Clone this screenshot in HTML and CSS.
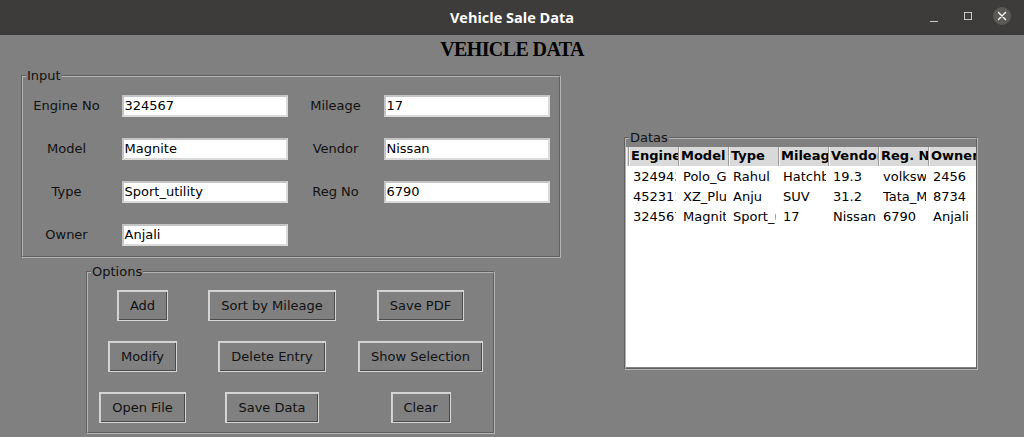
FILE: index.html
```html
<!DOCTYPE html>
<html>
<head>
<meta charset="utf-8">
<title>Vehicle Sale Data</title>
<link rel="stylesheet" href="styles.css">
</head>
<body>
<div class="window">
  <header class="titlebar">
    <span class="title">Vehicle Sale Data</span>
    <div class="controls">
      <span class="ctl-min"></span>
      <span class="ctl-max"></span>
      <span class="ctl-close">
        <svg width="18" height="18" viewBox="0 0 18 18"><path d="M5.5 5.5 L12.5 12.5 M12.5 5.5 L5.5 12.5" stroke="#ffffff" stroke-width="1.4" fill="none" stroke-linecap="round"/></svg>
      </span>
    </div>
  </header>
  <main class="app">
    <h1 class="heading">VEHICLE DATA</h1>
    <div class="panes">
      <div class="left">
        <fieldset class="frame input-frame">
          <legend>Input</legend>
          <div class="input-grid">
            <label class="lbl">Engine No</label>
            <div class="entry">324567</div>
            <label class="lbl">Mileage</label>
            <div class="entry">17</div>

            <label class="lbl">Model</label>
            <div class="entry">Magnite</div>
            <label class="lbl">Vendor</label>
            <div class="entry">Nissan</div>

            <label class="lbl">Type</label>
            <div class="entry">Sport_utility</div>
            <label class="lbl">Reg No</label>
            <div class="entry">6790</div>

            <label class="lbl">Owner</label>
            <div class="entry">Anjali</div>
          </div>
        </fieldset>
        <fieldset class="frame options-frame">
          <legend>Options</legend>
          <div class="btn-grid">
            <button class="btn">Add</button>
            <button class="btn">Sort by Mileage</button>
            <button class="btn">Save PDF</button>
            <button class="btn">Modify</button>
            <button class="btn">Delete Entry</button>
            <button class="btn">Show Selection</button>
            <button class="btn">Open File</button>
            <button class="btn">Save Data</button>
            <button class="btn">Clear</button>
          </div>
        </fieldset>
      </div>
      <div class="right">
        <fieldset class="frame datas-frame">
          <legend>Datas</legend>
          <div class="tree">
            <div class="tr thead">
              <div class="stub"></div>
              <div class="th">Engine No</div>
              <div class="th">Model</div>
              <div class="th">Type</div>
              <div class="th">Mileage</div>
              <div class="th">Vendor</div>
              <div class="th">Reg. No</div>
              <div class="th">Owner</div>
            </div>
            <div class="tr">
              <div class="stub"></div>
              <div class="td"><span class="cell">324943</span></div>
              <div class="td"><span class="cell">Polo_GT</span></div>
              <div class="td"><span class="cell">Rahul</span></div>
              <div class="td"><span class="cell">Hatchback</span></div>
              <div class="td"><span class="cell">19.3</span></div>
              <div class="td"><span class="cell">volkswagen</span></div>
              <div class="td"><span class="cell">2456</span></div>
            </div>
            <div class="tr">
              <div class="stub"></div>
              <div class="td"><span class="cell">452311</span></div>
              <div class="td"><span class="cell">XZ_Plus</span></div>
              <div class="td"><span class="cell">Anju</span></div>
              <div class="td"><span class="cell">SUV</span></div>
              <div class="td"><span class="cell">31.2</span></div>
              <div class="td"><span class="cell">Tata_Motors</span></div>
              <div class="td"><span class="cell">8734</span></div>
            </div>
            <div class="tr">
              <div class="stub"></div>
              <div class="td"><span class="cell">324567</span></div>
              <div class="td"><span class="cell">Magnite</span></div>
              <div class="td"><span class="cell">Sport_utility</span></div>
              <div class="td"><span class="cell">17</span></div>
              <div class="td"><span class="cell">Nissan</span></div>
              <div class="td"><span class="cell">6790</span></div>
              <div class="td"><span class="cell">Anjali</span></div>
            </div>
          </div>
        </fieldset>
      </div>
    </div>
  </main>
</div>
</body>
</html>
```

FILE: styles.css
```css
* { box-sizing: border-box; }

html, body {
  margin: 0;
  padding: 0;
  width: 1024px;
  height: 437px;
  overflow: hidden;
  background: #808080;
  font-family: "DejaVu Sans", sans-serif;
  font-size: 13px;
  color: #111;
}

.window {
  width: 1024px;
  height: 437px;
  display: flex;
  flex-direction: column;
}

/* ---------- title bar ---------- */
.titlebar {
  height: 35px;
  flex: none;
  background: #3d3c3a;
  display: flex;
  align-items: center;
  justify-content: center;
  position: relative;
}

.title {
  color: #ffffff;
  font-family: "Open Sans", "DejaVu Sans", sans-serif;
  font-weight: 700;
  font-size: 14.5px;
  letter-spacing: 0;
}

.controls {
  position: absolute;
  right: 13px;
  top: 7px;
  display: flex;
  align-items: center;
}

.ctl-min {
  width: 8px;
  height: 1px;
  background: #c8c8c6;
  margin-top: 10px;
  margin-right: 26px;
}

.ctl-max {
  width: 8px;
  height: 8px;
  border: 1px solid #c8c8c6;
  margin-right: 21px;
}

.ctl-close {
  width: 18px;
  height: 18px;
  border-radius: 50%;
  background: #5b5a57;
  display: flex;
}

/* ---------- app ---------- */
.app {
  flex: 1;
  display: flex;
  flex-direction: column;
}

.heading {
  margin: 3px 0 0;
  height: 22px;
  line-height: 22px;
  text-align: center;
  font-family: "Liberation Serif", serif;
  font-weight: 700;
  font-size: 20px;
  letter-spacing: -0.6px;
  color: #000;
}

.panes {
  display: flex;
  margin-top: 8px;
}

.left {
  display: flex;
  flex-direction: column;
  align-items: flex-start;
}

/* ---------- frames ---------- */
.frame {
  margin: 0;
  padding: 0;
  border: 2px groove #b4b4b4;
  min-width: 0;
}

.frame legend {
  padding: 0 1px;
  margin-left: 3px;
  line-height: 15px;
  font-size: 13px;
  color: #111;
}

.input-frame {
  margin-left: 21px;
  width: 540px;
}

.input-grid {
  display: grid;
  grid-template-columns: 87px 189px 73px 189px;
  grid-auto-rows: 43px;
  align-items: center;
  justify-items: center;
  padding-top: 1px;
}

.lbl {
  white-space: nowrap;
}

.entry {
  width: 166px;
  height: 22px;
  background: #ffffff;
  border: 2px solid #dadada;
  border-top-color: #c4c4c4;
  border-left-color: #c4c4c4;
  padding-left: 1px;
  line-height: 18px;
  color: #000;
  white-space: nowrap;
  overflow: hidden;
}

.options-frame {
  margin-left: 86px;
  margin-top: 6px;
  width: 409px;
}

.btn-grid {
  display: grid;
  grid-template-columns: 109px 150px 147px;
  grid-auto-rows: 31px;
  row-gap: 20px;
  align-items: start;
  justify-items: center;
  padding-top: 11px;
  padding-bottom: 9px;
}

.btn {
  height: 31px;
  padding: 0 12px;
  font-family: "DejaVu Sans", sans-serif;
  font-size: 13px;
  color: #111;
  background: #808080;
  border: 1px solid #d6d6d6;
  box-shadow: inset 1px 1px 0 #d0d0d0, inset -1px -1px 0 #4a4a4a;
  border-radius: 0;
  white-space: nowrap;
}

/* ---------- datas / tree ---------- */
.right {
  margin-left: 63px;
  margin-top: 62px;
}

.datas-frame {
  width: 354px;
  height: 240px;
  padding-top: 2px;
}

.tree {
  width: 350px;
  height: 220px;
  background: #ffffff;
  overflow: hidden;
}

.tr {
  display: flex;
  height: 20px;
  align-items: center;
}

.stub {
  width: 3px;
  flex: none;
  height: 100%;
}

.thead {
  height: 19px;
  background: #d9d9d9;
}

.thead .stub {
  border-left: 1px solid #f2f2f2;
  border-right: 1px solid #9c9c9c;
}

.th {
  width: 50px;
  flex: none;
  height: 100%;
  line-height: 17px;
  font-weight: 700;
  padding-left: 1px;
  border-left: 1px solid #f2f2f2;
  border-right: 1px solid #9c9c9c;
  white-space: nowrap;
  overflow: hidden;
  color: #000;
}

.td {
  width: 50px;
  flex: none;
  padding-left: 4px;
  display: flex;
}

.cell {
  display: block;
  width: 43px;
  white-space: nowrap;
  overflow: hidden;
  color: #000;
}
```
